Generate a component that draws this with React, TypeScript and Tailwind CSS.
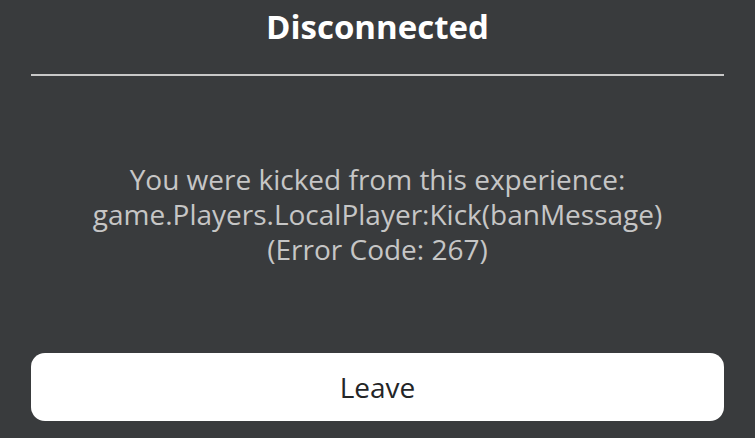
export default function App() {
  return (
    <div
      className="w-[755px] h-[438px] bg-[#393b3d] flex flex-col items-center overflow-hidden"
      style={{ fontFamily: '"Open Sans", "Noto Sans", sans-serif' }}
    >
      <div className="h-[74px] w-full flex items-center justify-center">
        <h1 className="text-[33px] font-bold text-white leading-none -mt-[22px]">Disconnected</h1>
      </div>
      <div className="w-[693px] h-[2px] bg-[#c8c8c8]" />
      <div className="flex-1 flex flex-col items-center justify-center text-center text-[28px] leading-[35px] text-[#c6c6c6]">
        <p>You were kicked from this experience:</p>
        <p>game.Players.LocalPlayer:Kick(banMessage)</p>
        <p>(Error Code: 267)</p>
      </div>
      <button className="w-[693px] h-[68px] mb-[17px] rounded-[14px] bg-white text-[28px] text-[#232527] flex items-center justify-center">
        Leave
      </button>
    </div>
  );
}
